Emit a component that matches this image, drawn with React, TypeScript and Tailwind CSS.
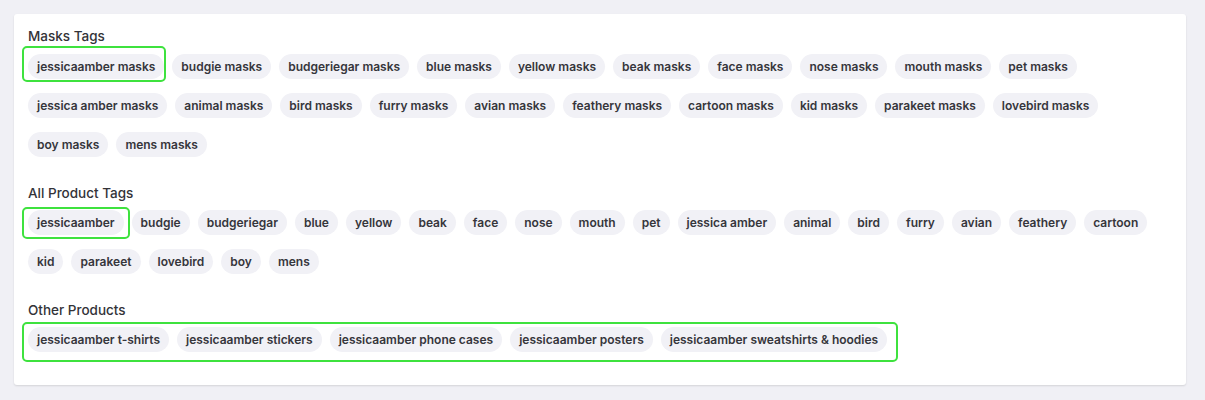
import React from "react";

const maskTags = [
  "jessicaamber masks",
  "budgie masks",
  "budgeriegar masks",
  "blue masks",
  "yellow masks",
  "beak masks",
  "face masks",
  "nose masks",
  "mouth masks",
  "pet masks",
  "jessica amber masks",
  "animal masks",
  "bird masks",
  "furry masks",
  "avian masks",
  "feathery masks",
  "cartoon masks",
  "kid masks",
  "parakeet masks",
  "lovebird masks",
  "boy masks",
  "mens masks",
];

const productTags = [
  "jessicaamber",
  "budgie",
  "budgeriegar",
  "blue",
  "yellow",
  "beak",
  "face",
  "nose",
  "mouth",
  "pet",
  "jessica amber",
  "animal",
  "bird",
  "furry",
  "avian",
  "feathery",
  "cartoon",
  "kid",
  "parakeet",
  "lovebird",
  "boy",
  "mens",
];

const otherProducts = [
  "jessicaamber t-shirts",
  "jessicaamber stickers",
  "jessicaamber phone cases",
  "jessicaamber posters",
  "jessicaamber sweatshirts & hoodies",
];

function Pill({ label, highlight }: { label: string; highlight?: string }) {
  return (
    <a className="relative flex h-[25px] items-center rounded-full bg-[#f1f1f6] px-[9px] text-[12px] font-semibold text-[#36363c] whitespace-nowrap">
      {label}
      {highlight && <span className={`pointer-events-none absolute rounded-[5px] border-2 border-[#3ee23e] ${highlight}`}></span>}
    </a>
  );
}

function Heading({ children }: { children: React.ReactNode }) {
  return <h2 className="h-5 text-[13.5px] font-medium leading-5 text-[#333338]">{children}</h2>;
}

export default function App() {
  return (
    <div className="min-h-[400px] bg-[#f0f0f5] pl-[14px] pr-[19px] pt-[14px]" style={{ fontFamily: "Inter, 'Open Sans', sans-serif" }}>
      <div className="rounded-[3px] bg-white px-[14px] pb-[33px] pt-[12px] shadow-[0_1px_2px_rgba(0,0,0,0.12)]">
        <Heading>Masks Tags</Heading>
        <div className="mt-2 flex flex-wrap gap-x-2 gap-y-[14px]">
          {maskTags.map((t, i) => (
            <Pill key={t} label={t} highlight={i === 0 ? "-left-[6px] -right-[2px] -top-[8px] -bottom-[3px]" : undefined} />
          ))}
        </div>

        <div className="mt-[26px]">
          <Heading>All Product Tags</Heading>
          <div className="mt-[7px] flex flex-wrap gap-x-2 gap-y-[14px]">
            {productTags.map((t, i) => (
              <Pill key={t} label={t} highlight={i === 0 ? "-left-[6px] -right-[6px] -top-[3px] -bottom-[4px]" : undefined} />
            ))}
          </div>
        </div>

        <div className="mt-[26px]">
          <Heading>Other Products</Heading>
          <div className="relative mt-[7px] flex w-fit flex-wrap gap-x-2">
            {otherProducts.map((t) => (
              <Pill key={t} label={t} />
            ))}
            <span className="pointer-events-none absolute -bottom-[10px] -left-[6px] -right-[11px] -top-[5px] rounded-[5px] border-2 border-[#3ee23e]"></span>
          </div>
        </div>
      </div>
    </div>
  );
}
